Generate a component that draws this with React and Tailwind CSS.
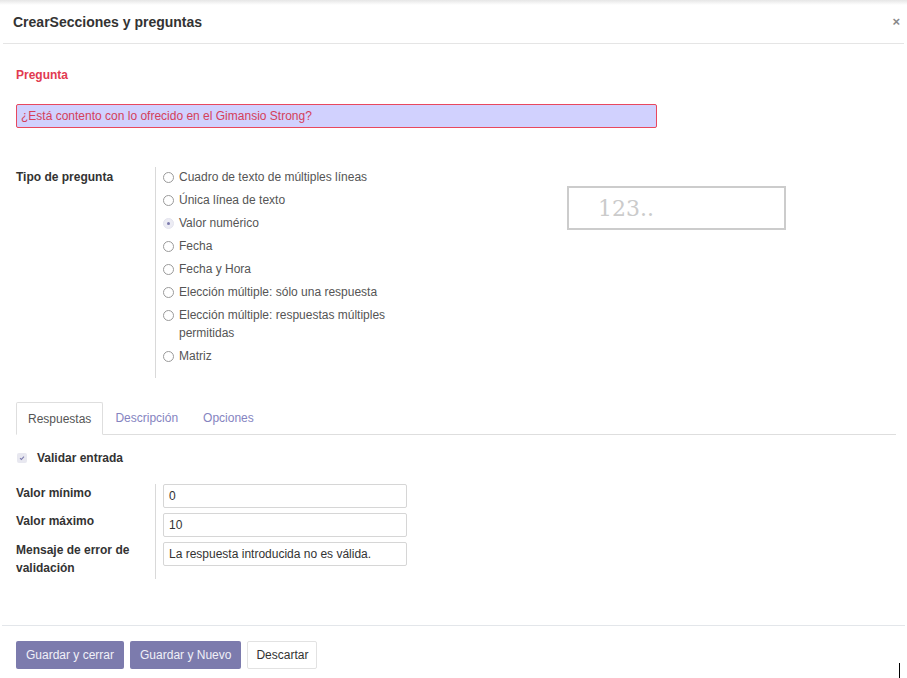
import React from 'react';

const tipos = [
  'Cuadro de texto de múltiples líneas',
  'Única línea de texto',
  'Valor numérico',
  'Fecha',
  'Fecha y Hora',
  'Elección múltiple: sólo una respuesta',
  'Elección múltiple: respuestas múltiples permitidas',
  'Matriz',
];

const Radio = ({ checked }) => (
  <span
    className={`mt-[4px] inline-flex h-[11px] w-[11px] flex-shrink-0 items-center justify-center rounded-full border ${
      checked ? 'border-[#e4e4ee] bg-[#ececf4]' : 'border-[#9a9a9a] bg-white'
    }`}
  >
    {checked && <span className="h-[3px] w-[3px] rounded-full bg-[#7c7bad]" />}
  </span>
);

const Field = ({ value }) => (
  <div className="flex h-[24px] w-[244px] items-center rounded-[2px] border border-[#d6d6d6] px-[5px] text-[12px] text-[#333]">
    {value}
  </div>
);

export default function App() {
  return (
    <div className="relative h-[678px] w-[907px] overflow-hidden bg-white font-['Liberation_Sans',Arial,sans-serif] text-[#4c4c4c]">
      <div className="h-[5px] bg-gradient-to-b from-[#e6e6e6] to-white" />
      {/* header */}
      <div className="mx-[3px] flex h-[39px] items-center justify-between border-b border-[#e5e5e5] pl-[10px] pr-[4px]">
        <h2 className="pb-[4px] text-[14px] font-bold text-[#333]">CrearSecciones y preguntas</h2>
        <span className="pb-[4px] text-[13px] font-bold text-[#888]">×</span>
      </div>

      <div className="px-[16px]">
        <div className="pt-[22px] text-[12px] font-bold text-[#e23a50]">Pregunta</div>
        <div className="mt-[20px] flex h-[24px] w-[641px] items-center rounded-[2px] border border-[#e8485e] bg-[#d1d1fe] px-[4px] text-[12px] text-[#d4405a]">
          ¿Está contento con lo ofrecido en el Gimansio Strong?
        </div>

        {/* tipo de pregunta */}
        <div className="mt-[39px] flex">
          <div className="w-[139px] pt-[1px] text-[12px] font-bold text-[#333]">Tipo de pregunta</div>
          <div className="w-[240px] border-l border-[#d9d9d9] pl-[7px] pt-[1px] pb-[8px]">
            {tipos.map((t, i) => (
              <div key={t} className="flex gap-[5px] pb-[5px] text-[12px] leading-[18px] text-[#555]">
                <Radio checked={i === 2} />
                <span className="w-[215px]">{t}</span>
              </div>
            ))}
          </div>
          <div className="ml-[172px] mt-[19px] flex h-[44px] w-[219px] items-center border-2 border-[#cccccc] pl-[29px] font-['DejaVu_Serif',serif] text-[22px] font-light text-[#cbcbcb]">
            123..
          </div>
        </div>

        {/* tabs */}
        <div className="-mr-[5px] mt-[24px] flex h-[33px] border-b border-[#dedede] text-[12px]">
          <div className="-mb-px flex h-[33px] items-center rounded-t-[2px] border border-b-white border-[#dedede] px-[11px] text-[#555]">
            Respuestas
          </div>
          <div className="flex items-center px-[12px] pl-[12px] text-[#8584bf]">Descripción</div>
          <div className="flex items-center px-[12px] pl-[13px] text-[#8584bf]">Opciones</div>
        </div>

        <div className="mt-[14px] flex items-center gap-[10px]">
          <span className="ml-[1px] flex h-[10px] w-[10px] items-center justify-center rounded-[2px] bg-[#e8e8f0]">
            <svg viewBox="0 0 10 10" className="h-[8px] w-[8px]" fill="none" stroke="#7c7bad" strokeWidth="1.3">
              <path d="M2.5 5.2 4.2 6.8 7.5 3.4" />
            </svg>
          </span>
          <span className="text-[12px] font-bold text-[#333]">Validar entrada</span>
        </div>

        <div className="mt-[17px] flex">
          <div className="w-[139px] text-[12px] font-bold leading-[18px] text-[#333]">
            <div className="h-[28px]">Valor mínimo</div>
            <div className="h-[29px]">Valor máximo</div>
            <div className="w-[125px]">Mensaje de error de validación</div>
          </div>
          <div className="flex flex-col gap-[5px] border-l border-[#d9d9d9] pb-[13px] pl-[7px]">
            <Field value="0" />
            <Field value="10" />
            <Field value="La respuesta introducida no es válida." />
          </div>
        </div>
      </div>

      {/* footer */}
      <div className="absolute bottom-0 left-0 right-0">
        <div className="mx-[2px] border-t border-[#e3e6ea]" />
        <div className="flex gap-[6px] px-[16px] pt-[15px] pb-[9px] text-[12px]">
          <button className="h-[28px] rounded-[2px] bg-[#7c7bad] px-[10px] text-[#f0f0f8]">Guardar y cerrar</button>
          <button className="h-[28px] rounded-[2px] bg-[#7c7bad] px-[10px] text-[#f0f0f8]">Guardar y Nuevo</button>
          <button className="h-[28px] rounded-[2px] border border-[#e2e2e2] bg-white px-[8px] text-[#333]">Descartar</button>
        </div>
      </div>
      <div className="absolute left-[899px] top-[663px] h-[15px] w-[1px] bg-black" />
    </div>
  );
}
